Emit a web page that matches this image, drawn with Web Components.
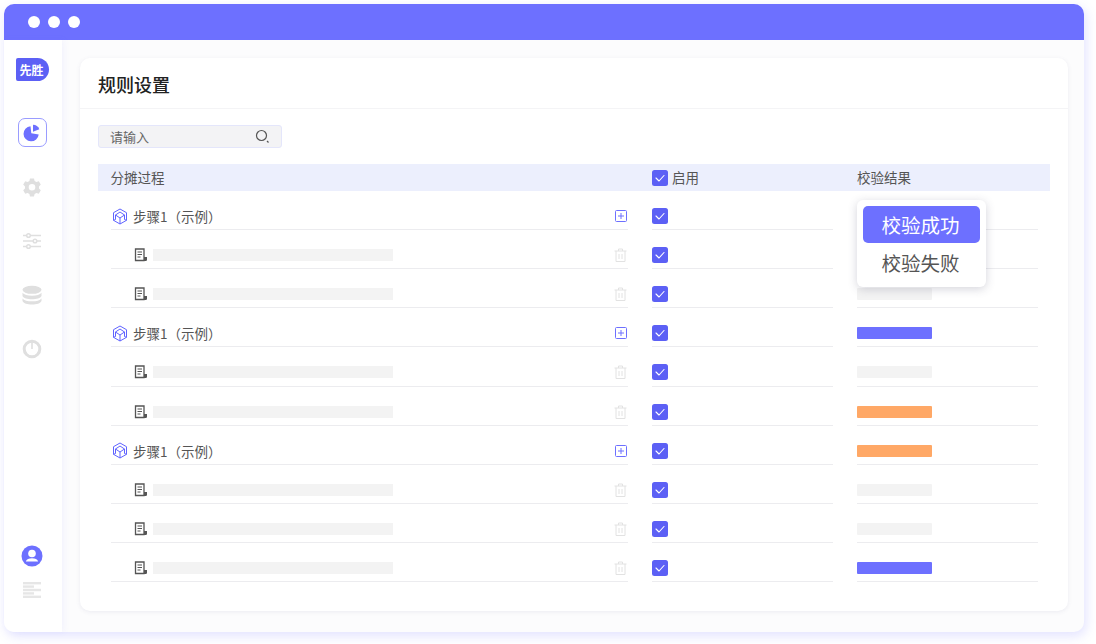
<!DOCTYPE html>
<html lang="zh"><head><meta charset="utf-8"><title>规则设置</title>
<style>
html,body{margin:0;padding:0;background:#fff}
body{width:1096px;height:644px;overflow:hidden;padding:4px;box-sizing:border-box;font-family:"Noto Sans CJK SC","Noto Sans",sans-serif;color:#444}
</style></head><body>
<app-window>
  <side-nav slot="side"></side-nav>
  <rule-card>
    <search-box slot="search"></search-box>
    <rule-table slot="table"></rule-table>
  </rule-card>
</app-window>
<script>
const CHECK=`<svg width="16" height="16" viewBox="0 0 16 16" style="display:block"><rect width="16" height="16" rx="2.5" fill="#5c60f5"/><path d="M4 8l3 3 5-5.5" fill="none" stroke="#fff" stroke-width="1.1" stroke-linecap="round" stroke-linejoin="round"/></svg>`;
const CUBE=`<svg width="16" height="17" viewBox="0 0 16 17" fill="none" stroke="#5f63ff" stroke-width="1" stroke-linejoin="round" style="display:block"><path d="M8 1l6.500 3.700v7.600L8 16l-6.500-3.700V4.700z"/><path d="M8 4L12.500 7 8 10 3.500 7zM8 10v6M3.500 7v4.500M12.500 7v4.500M1.500 12.300l2-.8M14.500 12.300l-2-.8"/></svg>`;
const PLUS=`<svg width="12" height="12" viewBox="0 0 12 12" fill="none" stroke="#6d70ff" style="display:block"><rect x=".5" y=".5" width="11" height="11" rx="1"/><path d="M3 6h6M6 3v6"/></svg>`;
const TRASH=`<svg width="13" height="14" viewBox="0 0 13 14" fill="none" stroke="#e2e2e2" style="display:block"><path d="M.5 3h12M4.500 3V1h4v2M2 3v10.500h9V3M5 6v5M8 6v5"/></svg>`;
const DOC=`<svg width="14" height="14" viewBox="0 0 14 14" style="display:block"><path d="M1.500 1h8.500v11.500H1.500z" fill="none" stroke="#555" stroke-width="1.300"/><path d="M3.500 4h4.500M3.500 6.500h4.500M3.500 9h3" stroke="#555" stroke-width="1.100"/><path d="M10 9h3v3a1.200 1.200 0 0 1-1.200 1H10z" fill="#555"/></svg>`;

class AppWindow extends HTMLElement{constructor(){super();this.attachShadow({mode:'open'}).innerHTML=`<style>
:host{display:flex;flex-direction:column;width:1080px;height:628px;border-radius:10px;background:#fcfcfd;box-shadow:2px 4px 12px rgba(109,112,255,.2)}
.top{height:36px;flex:none;background:#6d70ff;border-radius:10px 10px 0 0;display:flex;align-items:center;gap:8px;padding:0 0 1px 24px;box-sizing:border-box}
.top i{width:12px;height:12px;border-radius:50%;background:#fff}
.body{flex:1;display:flex;min-height:0}
.main{flex:1;min-width:0;padding:18px 16px 21px 18px;display:flex}
</style><div class="top"><i></i><i></i><i></i></div><div class="body"><slot name="side"></slot><div class="main"><slot></slot></div></div>`}}
customElements.define('app-window',AppWindow);

class SideNav extends HTMLElement{constructor(){super();this.attachShadow({mode:'open'}).innerHTML=`<style>
:host{display:flex;flex-direction:column;align-items:center;width:58px;flex:none;background:#fff;box-shadow:2px 0 6px rgba(109,112,255,.07);border-radius:0 0 0 10px;padding:18px 2px 0 0;box-sizing:border-box}
.logo{width:33px;height:23px;margin-left:1px;background:#5c60f5;border-radius:2px 12px 12px 2px;color:#fff;font:700 12px/23px "Noto Sans CJK SC",sans-serif;text-align:center;padding-right:2px;box-sizing:border-box}
.act{width:29px;height:29px;box-sizing:border-box;border:1.500px solid #9a9cff;border-radius:7px;display:flex;align-items:center;justify-content:center;margin-top:37px}
.ic{width:20px;height:20px;margin-top:34px}
.ic.first{margin-top:30px}
svg{display:block}
.sp{flex:1}
.ava{margin-bottom:15px}
.lines{margin-bottom:34px}
</style>
<div class="logo">先胜</div>
<div class="act"><svg width="20" height="20" viewBox="0 0 20 20"><path d="M8.500 3.200a7.600 7.600 0 1 0 8.200 8.300L9.300 10.300z" fill="#6d70ff"/><path d="M11 1.800a7 7 0 0 1 6.300 4.500L11 8.800z" fill="#6d70ff"/></svg></div>
<div class="ic first"><svg width="20" height="20" viewBox="0 0 20 20"><path fill="#dfdfdf" fill-rule="evenodd" d="M8 1.500h4l.6 2.400 1.800 1 2.400-.7 2 3.400-1.800 1.800v2.100l1.800 1.800-2 3.400-2.400-.7-1.800 1-.6 2.500H8l-.6-2.500-1.800-1-2.400.7-2-3.400L3 11.500V9.400L1.200 7.600l2-3.400 2.400.7 1.800-1zM10 7a3.300 3.300 0 1 0 0 6.600A3.300 3.300 0 0 0 10 7z"/></svg></div>
<div class="ic"><svg width="20" height="20" viewBox="0 0 20 20" fill="#fff" stroke="#dfdfdf" stroke-width="1.500"><path d="M1 4.500h18M1 10h18M1 15.500h18" fill="none"/><circle cx="6.500" cy="4.500" r="1.800"/><circle cx="13" cy="10" r="1.800"/><circle cx="6.500" cy="15.500" r="1.800"/></svg></div>
<div class="ic"><svg width="20" height="20" viewBox="0 0 20 20" fill="#dfdfdf"><ellipse cx="10" cy="4.800" rx="9.500" ry="4"/><path d="M.5 7.800c1.500 2 5 3 9.500 3s8-1 9.500-3V11c-1 2.300-5 3.300-9.500 3.300S1.500 13.300.5 11z"/><path d="M.5 13.500c1.500 2 5 2.800 9.500 2.800s8-.8 9.500-2.800V16c-1 2.500-5 3.500-9.500 3.500S1.500 18.500.5 16z"/></svg></div>
<div class="ic"><svg width="20" height="20" viewBox="0 0 20 20"><circle cx="10" cy="10" r="7.800" fill="#fff" stroke="#dfdfdf" stroke-width="3"/><path d="M9.200 2.500h1.600v7.500h-1.600z" fill="#dfdfdf"/></svg></div>
<div class="sp"></div>
<svg class="ava" width="22" height="22" viewBox="0 0 22 22"><circle cx="11" cy="11" r="10.500" fill="#6d70ff"/><circle cx="11" cy="8.500" r="3.800" fill="#fff"/><path d="M4.800 16.500c.8-2.500 3-3.300 6.200-3.300s5.400.8 6.200 3.300z" fill="#fff"/></svg>
<svg class="lines" width="18" height="16" viewBox="0 0 18 16" fill="#e6e6e6"><rect width="18" height="2.400"/><rect y="3.400" width="11" height="2.400"/><rect y="6.800" width="18" height="2.400"/><rect y="10.200" width="11" height="2.400"/><rect y="13.600" width="18" height="2.400"/></svg>`}}
customElements.define('side-nav',SideNav);

class RuleCard extends HTMLElement{constructor(){super();this.attachShadow({mode:'open'}).innerHTML=`<style>
:host{display:flex;flex-direction:column;flex:1;min-width:0;background:#fff;border-radius:10px;box-shadow:0 1px 4px rgba(90,90,140,.1)}
h1{margin:0;height:51px;box-sizing:border-box;border-bottom:1px solid #f4f4f6;padding:0 0 0 18px;font:500 18px/53px "Noto Sans CJK SC",sans-serif;color:#222}
.c{padding:16px 18px 0}
</style><h1>规则设置</h1><div class="c"><slot name="search"></slot><slot name="table"></slot></div>`}}
customElements.define('rule-card',RuleCard);

class SearchBox extends HTMLElement{constructor(){super();this.attachShadow({mode:'open'}).innerHTML=`<style>
:host{display:flex;align-items:center;justify-content:space-between;width:184px;height:23px;box-sizing:border-box;background:#f3f3f5;border:1px solid #e4e6fb;border-radius:3px;padding:0 11px 0 11px;font:13px/20px "Noto Sans CJK SC",sans-serif;color:#666}
</style><span>请输入</span><svg width="15" height="15" viewBox="0 0 15 15" fill="none" stroke="#555" style="display:block"><circle cx="6.500" cy="6.500" r="5" stroke-width="1.200"/><path d="M12 12l1.500 1.500" stroke-width="1.200"/></svg>`}}
customElements.define('search-box',SearchBox);

class RuleTable extends HTMLElement{constructor(){super();
const all=[['s','g'],['d','g'],['d','g'],['s','p'],['d','g'],['d','o'],['s','o'],['d','g'],['d','g'],['d','p']];
const html=all.map(([t,b])=>`<div class="row">
<div class="cell a ${t}">${t==='s'?`<span class="ico">${CUBE}</span><span class="name">步骤1（示例）</span><span class="act">${PLUS}</span>`:`<span class="doc">${DOC}</span><span class="sk"></span><span class="act">${TRASH}</span>`}</div>
<div class="cell b">${CHECK}</div>
<div class="cell c"><span class="bar ${b}"></span></div></div>`).join('');
this.attachShadow({mode:'open'}).innerHTML=`<style>
:host{display:block;position:relative;margin-top:16px;width:952px}
.head{display:grid;grid-template-columns:517px 181px 181px;column-gap:24px;height:27px;align-items:center;background:#eceffd;padding-left:12.500px;font:13.500px/27px "Noto Sans CJK SC",sans-serif;color:#555}
.head span:nth-child(2){margin-left:.5px}
.head span:nth-child(3){margin-left:.5px}
.en{display:flex;align-items:center;gap:4px}
.row{display:grid;grid-template-columns:517px 181px 181px;column-gap:24px;height:39.120px;padding-left:13px}
.cell{display:flex;align-items:center;border-bottom:1px solid #ececef;box-sizing:border-box;height:39.120px;padding-top:12px}
.ico{margin-right:6px;margin-left:1px}
.name{font:13.500px/20px "Noto Sans CJK SC",sans-serif;color:#555;flex:1;margin-left:-1px}
.doc{margin-left:23px;margin-right:5px}
.sk{width:240px;height:12px;background:#f3f3f3}
.a .act{margin-left:auto;width:14px;display:flex;justify-content:center}
.a.s .act{margin-right:0}
.a.d .act{margin-right:1px}
.bar{display:block;width:75px;height:12px;border-radius:1px}
.g{background:#f3f3f3}.p{background:#6d70ff}.o{background:#ffa866}
.menu{position:absolute;left:759px;top:36px;width:129px;height:87px;box-sizing:border-box;padding:6px;background:#fff;border-radius:6px;box-shadow:0 2px 10px rgba(60,60,90,.22);font:19.500px/38px "Noto Sans CJK SC",sans-serif;color:#555;text-align:center}
.menu div{height:38px;border-radius:5px;padding-right:2px}
.menu .on{height:37px;line-height:38px;background:#6d70ff;color:#fff;margin-bottom:1px}
</style>
<div class="head"><span>分摊过程</span><span class="en">${CHECK}启用</span><span>校验结果</span></div>
${html}
<div class="menu"><div class="on">校验成功</div><div>校验失败</div></div>`}}
customElements.define('rule-table',RuleTable);
</script>
</body></html>
